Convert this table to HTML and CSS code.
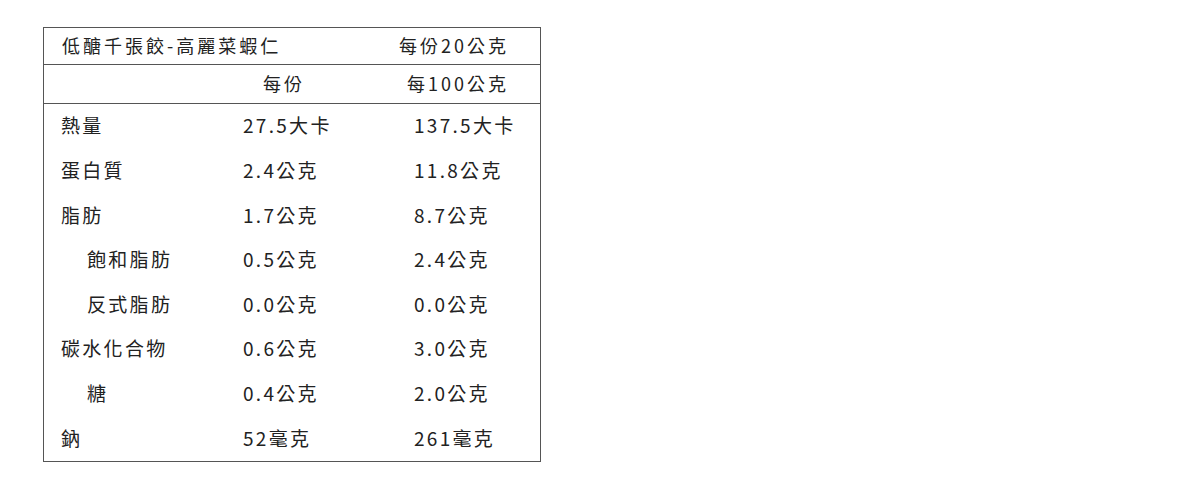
FILE: index.html
```html
<!DOCTYPE html>
<html lang="zh-Hant">
<head>
<meta charset="utf-8">
<link rel="stylesheet" href="styles.css">
</head>
<body>
<div class="panel">
  <div class="title-row">
    <span>低醣千張餃-高麗菜蝦仁</span>
    <span>每份20公克</span>
  </div>
  <div class="head-row">
    <span class="h-per">每份</span>
    <span class="h-100">每100公克</span>
  </div>
  <div class="body">
    <div class="row"><span class="lab">熱量</span><span class="v1">27.5大卡</span><span class="v2">137.5大卡</span></div>
    <div class="row"><span class="lab">蛋白質</span><span class="v1">2.4公克</span><span class="v2">11.8公克</span></div>
    <div class="row"><span class="lab">脂肪</span><span class="v1">1.7公克</span><span class="v2">8.7公克</span></div>
    <div class="row"><span class="lab sub">飽和脂肪</span><span class="v1">0.5公克</span><span class="v2">2.4公克</span></div>
    <div class="row"><span class="lab sub">反式脂肪</span><span class="v1">0.0公克</span><span class="v2">0.0公克</span></div>
    <div class="row"><span class="lab">碳水化合物</span><span class="v1">0.6公克</span><span class="v2">3.0公克</span></div>
    <div class="row"><span class="lab sub">糖</span><span class="v1">0.4公克</span><span class="v2">2.0公克</span></div>
    <div class="row"><span class="lab">鈉</span><span class="v1">52毫克</span><span class="v2">261毫克</span></div>
  </div>
</div>
</body>
</html>
```
FILE: styles.css
```css
html, body {
  margin: 0;
  padding: 0;
  background: #fff;
}
body {
  padding: 27px 0 0 43px;
  font-family: "Noto Sans CJK TC", "Noto Sans", sans-serif;
  color: #222;
}
.panel {
  width: 496px;
  border: 1px solid #555;
}
.title-row {
  display: flex;
  justify-content: space-between;
  align-items: center;
  box-sizing: border-box;
  height: 37px;
  padding: 0 31px 3px 18px;
  border-bottom: 1px solid #555;
  font-size: 18px;
  letter-spacing: 3px;
  line-height: 1;
  white-space: nowrap;
}
.head-row {
  display: flex;
  align-items: center;
  box-sizing: border-box;
  height: 39px;
  padding: 0 31px 3px 219px;
  border-bottom: 1px solid #555;
  font-size: 18px;
  letter-spacing: 3px;
  line-height: 1;
  white-space: nowrap;
}
.h-100 {
  margin-left: auto;
}
.body {
  display: flex;
  flex-direction: column;
  font-size: 19px;
  letter-spacing: 2.3px;
  line-height: 1;
  white-space: nowrap;
}
.row {
  display: grid;
  grid-template-columns: 199px 171px 1fr;
  align-items: center;
  box-sizing: border-box;
  height: 44.625px;
  padding-bottom: 3px;
}
.lab {
  padding-left: 17px;
}
.lab.sub {
  padding-left: 43px;
}
```
